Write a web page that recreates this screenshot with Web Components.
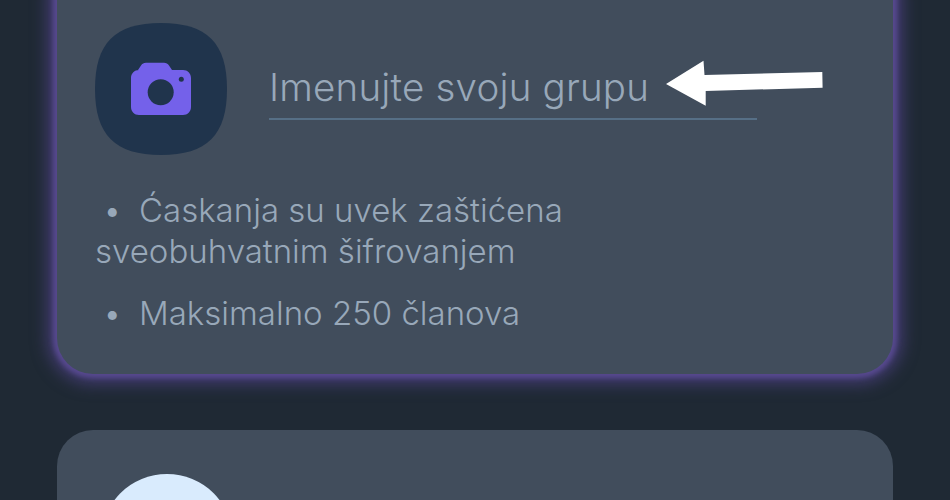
<!DOCTYPE html>
<html lang="sr">
  <head>
    <meta charset="UTF-8" />
    <title>Grupa</title>
    <style>
      html, body { margin: 0; height: 100%; overflow: hidden; background: #1f2934; }
      body { font-family: Inter, "Noto Sans", sans-serif; }
    </style>
  </head>
  <body>
    <template id="group-card-template">
      <style>
        :host {
          display: block;
          box-sizing: border-box;
          margin: 0 57px;
          padding: var(--pad, 0 38px);
          background: #414d5c;
          border-radius: 36px;
        }
        :host([glow]) {
          box-shadow: 0 0 5px 4px #57498f, 0 0 16px 10px rgba(88, 72, 150, 0.6);
        }
        :host([cut]) { overflow: hidden; }
      </style>
      <slot></slot>
    </template>

    <template id="group-name-template">
      <style>
        :host {
          display: flex;
          align-items: flex-start;
          gap: 42px;
          position: relative;
        }
        .squircle { display: block; width: 132px; height: 132px; flex: none; }
        .field {
          width: 488px;
          margin-top: 40px;
          height: 57px;
          box-sizing: border-box;
          border-bottom: 2px solid #566f86;
          font-size: 38.500px;
          font-weight: 300;
          line-height: 48px;
          letter-spacing: 0.2px;
          color: #98a8b9;
          white-space: nowrap;
        }
        .arrow { position: absolute; left: 570px; top: 37px; width: 158px; height: 46px; }
      </style>
      <svg class="squircle" viewBox="0 0 132 132">
        <path fill="#20344c" d="M66 0C112 0 132 20 132 66C132 112 112 132 66 132C20 132 0 112 0 66C0 20 20 0 66 0Z" />
        <path fill="#7461ea" d="M43 47L46 42.500C47.200 40.600 48.800 39.700 51 39.700H69C71.200 39.700 72.800 40.600 74 42.500L77 47H88C92.500 47 96 50.500 96 55V84C96 88.500 92.500 92 88 92H44C39.500 92 36 88.500 36 84V55C36 50.500 39.500 47 44 47Z" />
        <circle cx="65.700" cy="69.300" r="13" fill="#20344c" />
        <circle cx="86.300" cy="56.300" r="2.500" fill="#20344c" />
      </svg>
      <div class="field"><slot></slot></div>
      <svg class="arrow" viewBox="0 0 158 46">
        <path fill="#fff" d="M1 24 L38.500 .7 L39.500 15 L157.300 12 L157.600 27.700 L40.700 31 L40.700 45.700Z" />
      </svg>
    </template>

    <template id="group-note-template">
      <style>
        :host {
          display: block;
          max-width: 560px;
          font-size: 33px;
          font-weight: 300;
          line-height: 41px;
          color: #98a8b9;
          text-indent: 8px;
        }
        .dot { display: inline-block; width: 36px; text-indent: 0; }
      </style>
      <span class="dot">•</span><slot></slot>
    </template>

    <template id="contact-avatar-template">
      <style>
        :host {
          display: block;
          width: 132px;
          height: 132px;
          border-radius: 50%;
          background: #d9ebfd;
        }
      </style>
    </template>

    <group-card glow style="--pad: 63px 38px 0; margin-top: -40px; height: 414px">
      <group-name>Imenujte svoju grupu</group-name>
      <group-note style="margin-top: 35px">Ćaskanja su uvek zaštićena sveobuhvatnim šifrovanjem</group-note>
      <group-note style="margin-top: 21px">Maksimalno 250 članova</group-note>
    </group-card>

    <group-card cut style="--pad: 44px 38px 0; margin-top: 56px; height: 70px; border-radius: 36px 36px 0 0">
      <contact-avatar style="margin-left: 6px"></contact-avatar>
    </group-card>

    <script>
      // svaki element klonira svoj template u shadow root
      class TemplateElement extends HTMLElement {
        constructor() {
          super();
          this.attachShadow({ mode: "open" });
          const template = document.querySelector(this.constructor.templateId);
          this.shadowRoot.appendChild(template.content.cloneNode(true));
        }
      }

      class GroupCard extends TemplateElement {
        static templateId = "#group-card-template";
      }
      class GroupName extends TemplateElement {
        static templateId = "#group-name-template";
      }
      class GroupNote extends TemplateElement {
        static templateId = "#group-note-template";
      }
      class ContactAvatar extends TemplateElement {
        static templateId = "#contact-avatar-template";
      }

      customElements.define("group-card", GroupCard);
      customElements.define("group-name", GroupName);
      customElements.define("group-note", GroupNote);
      customElements.define("contact-avatar", ContactAvatar);
    </script>
  </body>
</html>
